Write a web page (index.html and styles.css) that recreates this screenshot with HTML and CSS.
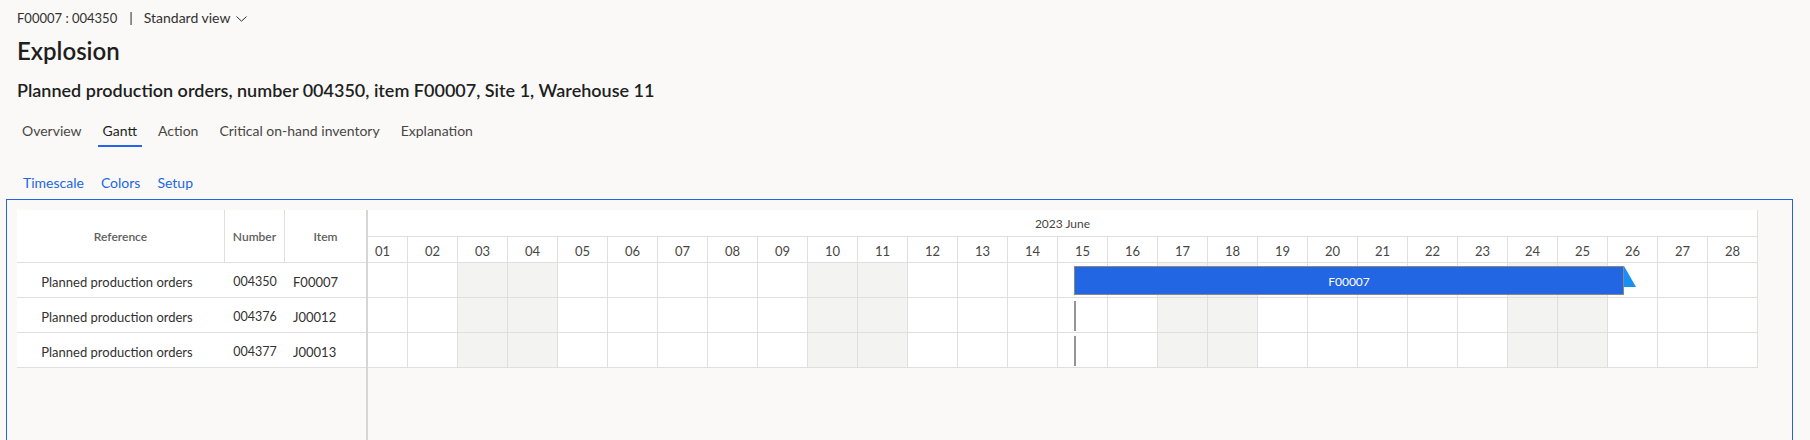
FILE: index.html
```html
<!DOCTYPE html>
<html lang="en">
<head>
<meta charset="utf-8">
<title>Explosion</title>
<link rel="stylesheet" href="styles.css">
</head>
<body>
<div class="topline">
  <span class="rec">F00007 : 004350</span>
  <span class="sep">|</span>
  <span class="view">Standard view</span>
  <svg class="chev" width="11" height="6" viewBox="0 0 11 6"><path d="M0.5 0.5 L5.5 5.2 L10.5 0.5" fill="none" stroke="#323130" stroke-width="1"/></svg>
</div>
<h1 class="title">Explosion</h1>
<h2 class="subtitle">Planned production orders, number 004350, item F00007, Site 1, Warehouse 11</h2>
<nav class="tabs">
  <span class="tab">Overview</span>
  <span class="tab active">Gantt</span>
  <span class="tab">Action</span>
  <span class="tab">Critical on-hand inventory</span>
  <span class="tab">Explanation</span>
</nav>
<div class="links">
  <span class="link">Timescale</span>
  <span class="link">Colors</span>
  <span class="link">Setup</span>
</div>
<div class="panel">
  <div class="gtable">
    <div class="left">
      <div class="lhead">
        <div class="hc ref">Reference</div>
        <div class="hc num">Number</div>
        <div class="hc item">Item</div>
      </div>
      <div class="lrow"><div class="c ref">Planned production orders</div><div class="c num">004350</div><div class="c item">F00007</div></div>
      <div class="lrow"><div class="c ref">Planned production orders</div><div class="c num">004376</div><div class="c item">J00012</div></div>
      <div class="lrow"><div class="c ref">Planned production orders</div><div class="c num">004377</div><div class="c item">J00013</div></div>
    </div>
    <div class="right">
      <div class="month">2023 June</div>
      <div class="days" id="days"></div>
      <div class="grow" id="r1"><div class="bar">F00007</div><div class="tri"></div></div>
      <div class="grow" id="r2"><div class="mark"></div></div>
      <div class="grow" id="r3"><div class="mark"></div></div>
    </div>
  </div>
</div>
<script src="app.js"></script>
</body>
</html>
```
FILE: app.js
```js
(function () {
  var weekend = [3, 4, 10, 11, 17, 18, 24, 25];
  function pad(n) { return (n < 10 ? '0' : '') + n; }
  var days = document.getElementById('days');
  for (var d = 1; d <= 28; d++) {
    var c = document.createElement('div');
    c.className = 'day' + (d === 1 ? ' first' : '');
    c.textContent = pad(d);
    days.appendChild(c);
  }
  ['r1', 'r2', 'r3'].forEach(function (id) {
    var row = document.getElementById(id);
    var first = row.firstChild;
    for (var d = 1; d <= 28; d++) {
      var c = document.createElement('div');
      c.className = 'cell' + (d === 1 ? ' first' : '') + (weekend.indexOf(d) >= 0 ? ' we' : '');
      row.insertBefore(c, first);
    }
  });
})();
```
FILE: styles.css
```css
* { box-sizing: border-box; }
html, body { margin: 0; padding: 0; }
body {
  background: #faf9f8;
  font-family: Lato, "Open Sans", sans-serif;
  color: #323130;
  width: 1810px;
  height: 440px;
  overflow: hidden;
}
.topline {
  margin-top: 8px;
  padding-left: 17px;
  height: 20px;
  line-height: 20px;
  font-size: 14px;
  display: flex;
  align-items: center;
  color: #323130;
}
.rec { font-size: 13px; }
.sep { margin: 0 11px 0 12px; }
.chev { margin-left: 6px; margin-top: 1px; }
.title {
  margin: 7px 0 0;
  padding-left: 17px;
  font-size: 24px;
  line-height: 32px;
  font-weight: 600;
  color: #201f1e;
}
.subtitle {
  margin: 11px 0 0;
  padding-left: 17px;
  font-size: 18px;
  line-height: 24px;
  font-weight: 600;
  color: #201f1e;
}
.tabs {
  margin-top: 13px;
  padding-left: 17px;
  display: flex;
  gap: 11px;
  font-size: 14px;
}
.tab {
  padding: 6px 5px 4px;
  line-height: 20px;
  color: #484644;
  border-bottom: 2px solid transparent;
}
.tab.active { color: #201f1e; border-bottom-color: #2266e3; }
.links {
  margin-top: 26px;
  padding-left: 17px;
  display: flex;
  gap: 5px;
  font-size: 14px;
  line-height: 20px;
}
.link { color: #2266e3; padding: 0 6px; }
.panel {
  margin: 6px 0 0 6px;
  width: 1787px;
  height: 270px;
  border: 1px solid #2266e3;
  padding: 10px 0 0 10px;
}
.gtable { display: flex; height: 100%; }
.left { width: 349px; }
.lhead {
  display: flex;
  height: 53px;
  background: #fff;
  border-bottom: 1px solid #e1dfdd;
}
.hc {
  display: flex;
  align-items: center;
  justify-content: center;
  font-size: 12px;
  font-weight: 600;
  color: #605e5c;
  border-right: 1px solid #e1dfdd;
}
.hc.item { border-right: none; }
.ref { width: 208px; }
.num { width: 60px; }
.item { width: 81px; }
.lrow {
  display: flex;
  height: 35px;
  background: #fff;
  border-bottom: 1px solid #e1dfdd;
  font-size: 13px;
  color: #323130;
}
.c { display: flex; align-items: center; padding-top: 3px; }
.c.ref, .c.num { justify-content: center; }
.c.ref { padding-right: 8px; }
.c.num { font-size: 12.5px; }
.c.item { padding-left: 8px; }
.right {
  width: 1392px;
  border-left: 2px solid #d8d6d4;
}
.month {
  height: 27px;
  line-height: 26px;
  padding-top: 1px;
  background: #fff;
  border-bottom: 1px solid #e1dfdd;
  border-right: 1px solid #e1dfdd;
  text-align: center;
  font-size: 12px;
  color: #484644;
  width: 1390px;
}
.days, .grow { display: flex; width: 1390px; }
.days { height: 26px; background: #fff; border-bottom: 1px solid #e1dfdd; }
.day {
  width: 50px;
  flex: none;
  border-right: 1px solid #e1dfdd;
  text-align: center;
  line-height: 24px;
  padding-top: 2px;
  font-size: 13px;
  color: #484644;
}
.day.first { width: 40px; padding-right: 10px; }
.grow {
  height: 35px;
  position: relative;
  border-bottom: 1px solid #e1dfdd;
  background: #fff;
}
.cell { width: 50px; flex: none; border-right: 1px solid #e1dfdd; }
.cell.first { width: 40px; }
.cell.we { background: #f3f4f1; }
.bar {
  position: absolute;
  left: 706px;
  top: 3px;
  width: 550px;
  height: 29px;
  padding-top: 2px;
  background: #2266e3;
  border: 1px solid #8a8886;
  color: #fff;
  font-size: 12px;
  display: flex;
  align-items: center;
  justify-content: center;
}
.tri {
  position: absolute;
  left: 1256px;
  top: 3px;
  width: 0;
  height: 0;
  border-top: 21px solid transparent;
  border-left: 12px solid #1890f1;
}
.mark {
  position: absolute;
  left: 706px;
  top: 3px;
  width: 2px;
  height: 30px;
  background: #979593;
}
```
